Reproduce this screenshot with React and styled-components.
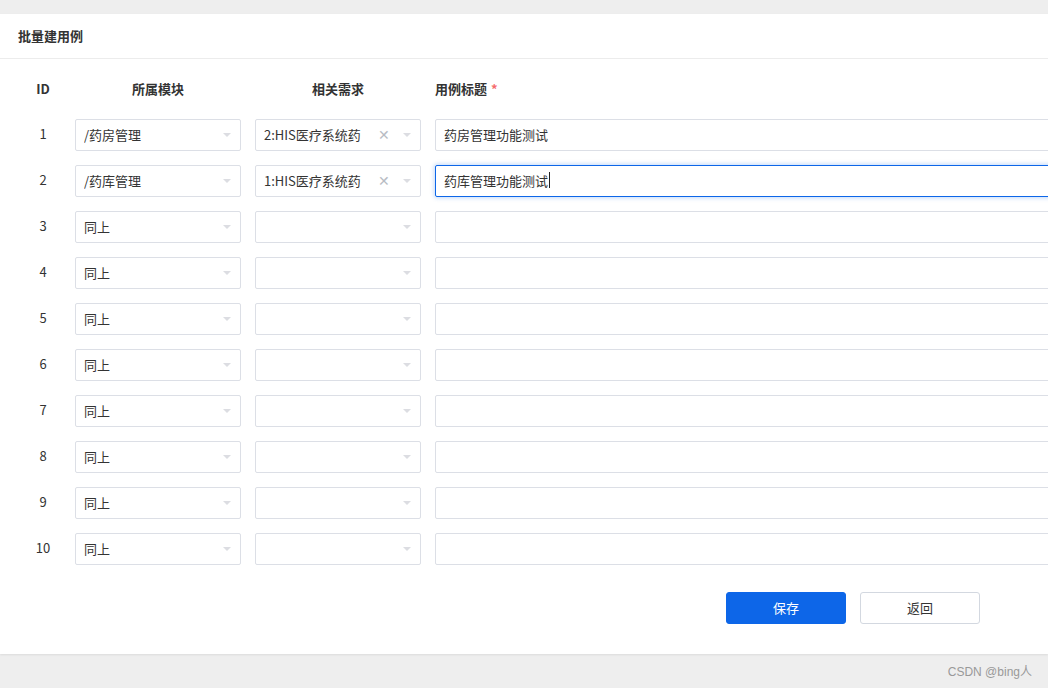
import React from "react";
import styled, { createGlobalStyle } from "styled-components";

const Global = createGlobalStyle`
  html, body { margin: 0; padding: 0; }
  body {
    background: #eeeeee;
    font-family: "Noto Sans CJK SC", "Noto Sans", "Liberation Sans", sans-serif;
    color: #333;
    overflow: hidden;
    width: 1048px;
    height: 688px;
  }
`;

const Page = styled.div`
  width: 1048px;
  height: 688px;
  display: flex;
  flex-direction: column;
  padding-top: 14px;
  box-sizing: border-box;
  background: #eeeeee;
`;

const Card = styled.div`
  background: #fff;
  height: 640px;
  box-sizing: border-box;
  box-shadow: 0 1px 2px rgba(0, 0, 0, 0.08);
  display: flex;
  flex-direction: column;
  overflow: hidden;
`;

const CardHeader = styled.div`
  height: 45px;
  border-bottom: 1px solid #ececec;
  display: flex;
  align-items: center;
  padding: 0 0 2px 18px;
  box-sizing: border-box;
  font-size: 13px;
  font-weight: 700;
  color: #333;
`;

const Body = styled.div`
  padding: 14px 0 0 18px;
  display: flex;
  flex-direction: column;
  gap: 14px;
`;

const Row = styled.div`
  display: flex;
  align-items: center;
  gap: 14px;
  height: 32px;
  padding-bottom: ${(p) => (p.$head ? "2px" : "0")};
  box-sizing: border-box;
`;

const IdCell = styled.div`
  flex: 0 0 36px;
  padding-left: 7px;
  text-align: center;
  font-size: 13px;
  font-weight: ${(p) => (p.$head ? 700 : 400)};
  color: #333;
  padding-bottom: ${(p) => (p.$head ? "0" : "3px")};
`;

const HeadCell = styled.div`
  flex: 0 0 ${(p) => (p.$w ? `${p.$w}px` : "auto")};
  text-align: ${(p) => p.$align || "center"};
  font-size: 13px;
  font-weight: 700;
  color: #333;
`;

const Star = styled.span`
  color: #f56c6c;
  margin-left: 4px;
  font-weight: 700;
`;

const Select = styled.div`
  flex: 0 0 166px;
  height: 32px;
  box-sizing: border-box;
  border: 1px solid #dcdfe6;
  border-radius: 2px;
  display: flex;
  align-items: center;
  padding: 0 8px 2px 8px;
  font-size: 13px;
  color: #333;
  background: #fff;
`;

const SelectText = styled.span`
  flex: 1;
  white-space: nowrap;
  overflow: hidden;
`;

const Clear = styled.span`
  color: #b8bcc4;
  font-size: 14px;
  margin-right: 13px;
  line-height: 1;
`;

const Arrow = styled.span`
  width: 0;
  height: 0;
  border-left: 4px solid transparent;
  border-right: 4px solid transparent;
  border-top: 4px solid #dcdde2;
  margin: 2px 1px 0 0;
`;

const TitleField = styled.div`
  flex: 0 0 720px;
  height: 32px;
  box-sizing: border-box;
  border: 1px solid ${(p) => (p.$focus ? "#0d66e8" : "#dcdfe6")};
  box-shadow: ${(p) => (p.$focus ? "0 0 4px 1px rgba(13,102,232,0.25)" : "none")};
  border-radius: 2px;
  display: flex;
  align-items: center;
  padding: 0 0 2px 8px;
  font-size: 13px;
  color: #333;
  background: #fff;
`;

const Caret = styled.span`
  display: inline-block;
  width: 1px;
  height: 16px;
  background: #222;
  margin-left: 1px;
`;

const Actions = styled.div`
  display: flex;
  justify-content: flex-end;
  gap: 14px;
  padding: 27px 68px 0 0;
`;

const Button = styled.button`
  width: 120px;
  height: 32px;
  border-radius: 3px;
  font-family: inherit;
  font-size: 13px;
  padding: 0 0 2px;
  cursor: pointer;
  border: 1px solid ${(p) => (p.$primary ? "#0d66e8" : "#d3d8e0")};
  background: ${(p) => (p.$primary ? "#0d66e8" : "#fff")};
  color: ${(p) => (p.$primary ? "#fff" : "#333")};
`;

const Footer = styled.div`
  flex: 1;
  display: flex;
  align-items: center;
  justify-content: flex-end;
  padding: 0 16px 1px 0;
  font-size: 12px;
  color: #999;
  font-family: "Liberation Sans", "Noto Sans CJK SC", sans-serif;
`;

const rows = [
  { id: 1, mod: "/药房管理", req: "2:HIS医疗系统药", title: "药房管理功能测试" },
  { id: 2, mod: "/药库管理", req: "1:HIS医疗系统药", title: "药库管理功能测试", focus: true },
  ...Array.from({ length: 8 }, (_, i) => ({ id: i + 3, mod: "同上", req: "", title: "" })),
];

export default function App() {
  return (
    <>
      <Global />
      <Page>
        <Card>
          <CardHeader>批量建用例</CardHeader>
          <Body>
            <Row $head>
              <IdCell $head>ID</IdCell>
              <HeadCell $w={166}>所属模块</HeadCell>
              <HeadCell $w={166}>相关需求</HeadCell>
              <HeadCell $align="left">
                用例标题<Star>*</Star>
              </HeadCell>
            </Row>
            {rows.map((r) => (
              <Row key={r.id}>
                <IdCell>{r.id}</IdCell>
                <Select>
                  <SelectText>{r.mod}</SelectText>
                  <Arrow />
                </Select>
                <Select>
                  <SelectText>{r.req}</SelectText>
                  {r.req && <Clear>✕</Clear>}
                  <Arrow />
                </Select>
                <TitleField $focus={r.focus}>
                  {r.title}
                  {r.focus && <Caret />}
                </TitleField>
              </Row>
            ))}
          </Body>
          <Actions>
            <Button $primary>保存</Button>
            <Button>返回</Button>
          </Actions>
        </Card>
        <Footer>CSDN @bing人</Footer>
      </Page>
    </>
  );
}
